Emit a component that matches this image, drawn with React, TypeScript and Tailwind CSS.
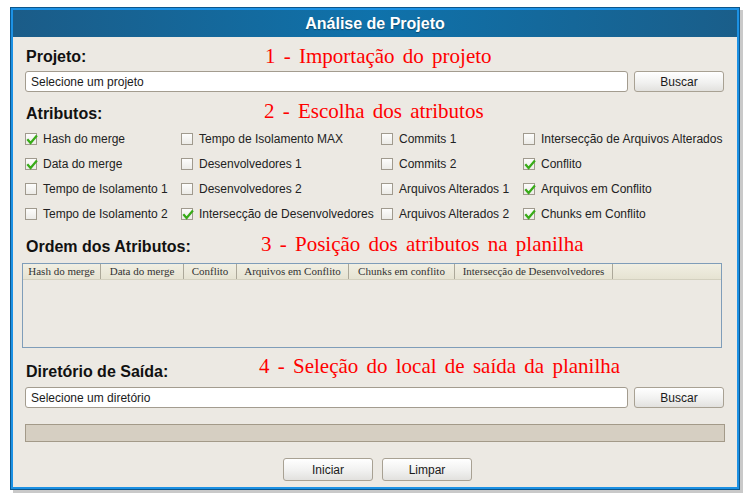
import React from "react";

type Attr = { label: string; checked: boolean };

const columns: { width: string; items: Attr[] }[] = [
  {
    width: "w-[156px]",
    items: [
      { label: "Hash do merge", checked: true },
      { label: "Data do merge", checked: true },
      { label: "Tempo de Isolamento 1", checked: false },
      { label: "Tempo de Isolamento 2", checked: false },
    ],
  },
  {
    width: "w-[200px]",
    items: [
      { label: "Tempo de Isolamento MAX", checked: false },
      { label: "Desenvolvedores 1", checked: false },
      { label: "Desenvolvedores 2", checked: false },
      { label: "Intersecção de Desenvolvedores", checked: true },
    ],
  },
  {
    width: "w-[142px]",
    items: [
      { label: "Commits 1", checked: false },
      { label: "Commits 2", checked: false },
      { label: "Arquivos Alterados 1", checked: false },
      { label: "Arquivos Alterados 2", checked: false },
    ],
  },
  {
    width: "w-[200px]",
    items: [
      { label: "Intersecção de Arquivos Alterados", checked: false },
      { label: "Conflito", checked: true },
      { label: "Arquivos em Conflito", checked: true },
      { label: "Chunks em Conflito", checked: true },
    ],
  },
];

const headers = [
  { label: "Hash do merge", width: "w-[78px]" },
  { label: "Data do merge", width: "w-[83px]" },
  { label: "Conflito", width: "w-[53px]" },
  { label: "Arquivos em Conflito", width: "w-[112px]" },
  { label: "Chunks em conflito", width: "w-[106px]" },
  { label: "Intersecção de Desenvolvedores", width: "w-[158px]" },
];

const sans = "font-['Liberation_Sans',Arial,sans-serif]";
const serif = "font-['Liberation_Serif','Times_New_Roman',serif]";

function CheckBox({ checked }: { checked: boolean }) {
  return (
    <span className="relative h-[12px] w-[12px] shrink-0 border border-[#a09a8e] bg-[linear-gradient(180deg,#fdfdfc,#ecebe7)]">
      {checked && (
        <svg
          viewBox="0 0 12 12"
          className="absolute left-[0px] top-[0px] h-[12px] w-[12px] overflow-visible"
        >
          <path
            d="M2 6 L4.6 9 L10.2 2.4"
            fill="none"
            stroke="#38ab18"
            strokeWidth="2.2"
            strokeLinecap="square"
          />
        </svg>
      )}
    </span>
  );
}

function Heading({
  label,
  note,
  width,
  lift,
}: {
  label: string;
  note: string;
  width: string;
  lift: string;
}) {
  return (
    <div className="ml-[13px] flex h-[24px] items-center">
      <span className={`${width} shrink-0 text-[16px] font-bold text-[#111] ${sans}`}>
        {label}
      </span>
      <span
        className={`${lift} whitespace-nowrap text-[21px] leading-none text-[#ff0000] [word-spacing:3px] ${serif}`}
      >
        {note}
      </span>
    </div>
  );
}

function Button({ children, tall }: { children: React.ReactNode; tall?: boolean }) {
  return (
    <button
      type="button"
      className={`flex ${tall ? "h-[23px]" : "h-[21px]"} w-[90px] items-center justify-center rounded-[3px] border border-[#a8a193] bg-[linear-gradient(180deg,#ffffff,#f1f1f0_55%,#e2e1de)] text-[12px] text-[#1a1a1a] ${sans}`}
    >
      {children}
    </button>
  );
}

function PathRow({ placeholder }: { placeholder: string }) {
  return (
    <div className="ml-[12px] flex gap-[6px]">
      <div
        className={`flex h-[21px] w-[603px] items-center rounded-[3px] border border-[#a39c8f] bg-white pl-[5px] text-[12px] text-[#1a1a1a] ${sans}`}
      >
        {placeholder}
      </div>
      <Button>Buscar</Button>
    </div>
  );
}

export default function App() {
  return (
    <div className="min-h-[501px] bg-white pl-[10px] pt-[7px]">
      <div className="h-[483px] w-[730px] border border-[#0c568b] shadow-[3px_3px_0_#c9c9c9]">
        <div className="flex h-full flex-col border-2 border-[#1c91e4] bg-[#ece9e3]">
          <div className="flex h-[27px] shrink-0 items-center justify-center bg-[linear-gradient(90deg,#1b5c88,#0f72ab_50%,#1a5e8a)]">
            <span
              className={`text-[16px] font-bold text-white [text-shadow:0_1px_1px_rgba(0,0,0,0.35)] ${sans}`}
            >
              Análise de Projeto
            </span>
          </div>

          <div className="mt-[8px]">
            <Heading
              label="Projeto:"
              note="1 - Importação do projeto"
              width="w-[239px]"
              lift="-translate-y-[1px]"
            />
          </div>
          <div className="mt-[2px]">
            <PathRow placeholder="Selecione um projeto" />
          </div>

          <div className="mt-[10px]">
            <Heading
              label="Atributos:"
              note="2 - Escolha dos atributos"
              width="w-[238px]"
              lift="-translate-y-[3px]"
            />
          </div>

          <div className="ml-[12px] flex">
            {columns.map((col, ci) => (
              <div key={ci} className={`${col.width} flex flex-col`}>
                {col.items.map((item) => (
                  <div key={item.label} className="flex h-[25px] items-center gap-[6px]">
                    <CheckBox checked={item.checked} />
                    <span className={`whitespace-nowrap text-[12px] text-[#222] ${sans}`}>
                      {item.label}
                    </span>
                  </div>
                ))}
              </div>
            ))}
          </div>

          <div className="mt-[9px]">
            <Heading
              label="Ordem dos Atributos:"
              note="3 - Posição dos atributos na planilha"
              width="w-[235px]"
              lift="-translate-y-[3px]"
            />
          </div>

          <div className="ml-[9px] mt-[4px] h-[85px] w-[700px] border border-[#7f9db9] bg-[#ece9e3]">
            <div className="flex h-[16px] border-b border-[#d3d0bf] bg-[linear-gradient(180deg,#f1efe3,#e6e3d2)]">
              {headers.map((h) => (
                <div
                  key={h.label}
                  className={`${h.width} flex shrink-0 items-center justify-center border-r border-[#aca899] text-[11px] font-normal text-[#333] ${serif}`}
                >
                  {h.label}
                </div>
              ))}
            </div>
          </div>

          <div className="mt-[12px]">
            <Heading
              label="Diretório de Saída:"
              note="4 - Seleção do local de saída da planilha"
              width="w-[233px]"
              lift="-translate-y-[6px]"
            />
          </div>
          <div className="mt-[3px]">
            <PathRow placeholder="Selecione um diretório" />
          </div>

          <div className="ml-[12px] mt-[16px] h-[18px] w-[700px] border border-[#a39a89] bg-[#d6cfc2]" />

          <div className="mt-[16px] flex justify-center gap-[9px] pl-[5px]">
            <Button tall>Iniciar</Button>
            <Button tall>Limpar</Button>
          </div>
        </div>
      </div>
    </div>
  );
}
